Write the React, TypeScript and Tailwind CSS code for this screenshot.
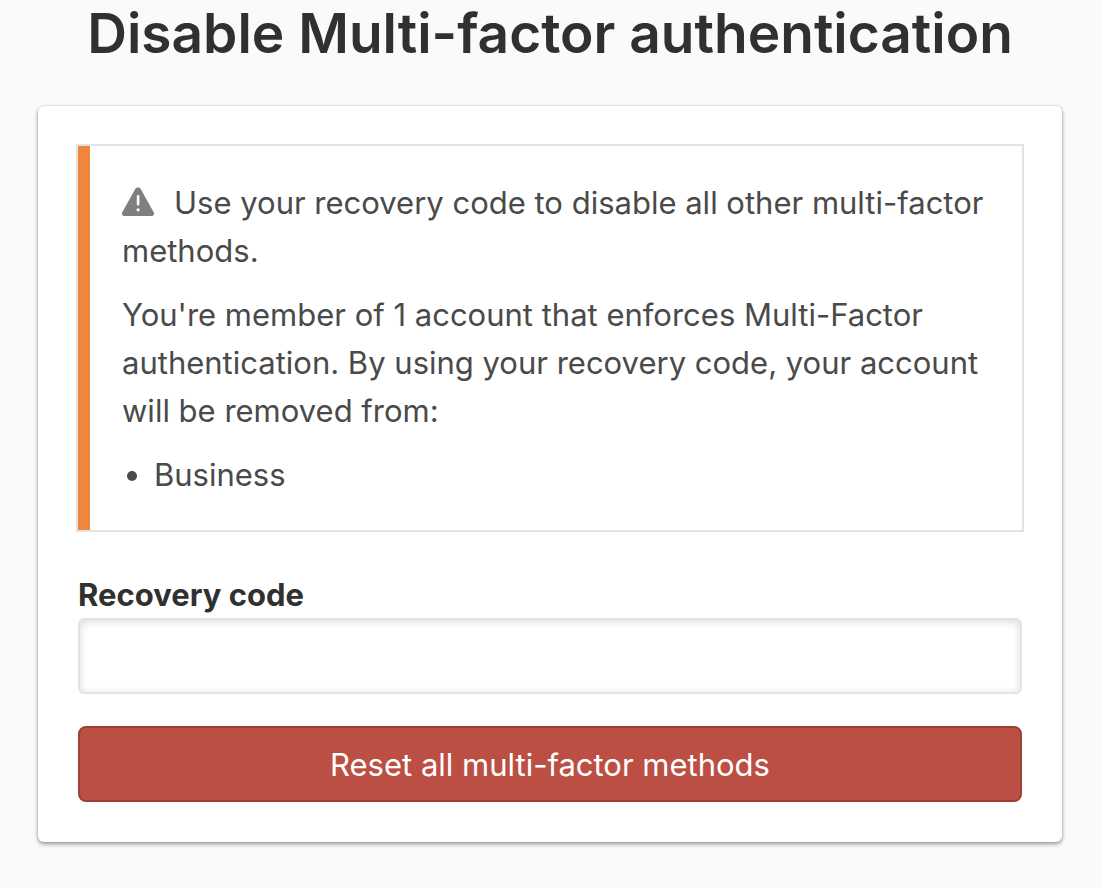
export default function App() {
  return (
    <main className="min-h-screen bg-[#fafafa] pr-10 pl-[38px] pb-11 font-[Inter,sans-serif] text-[#4a4a4a]">
      <h1 className="text-center text-[55px] leading-[66px] font-semibold text-[#303030]">Disable Multi-factor authentication</h1>
      <section className="mt-10 rounded-md bg-white px-[38px] pt-[38px] pb-10 shadow-[0_2px_4px_rgba(0,0,0,0.4),0_0_2px_rgba(0,0,0,0.15)]">
        <div className="flex border-2 border-[#e3e3e3]">
          <div className="w-3 shrink-0 bg-[#f0853f]" />
          <div className="flex flex-col gap-4 pt-[33px] pr-6 pb-[31px] pl-8 text-[31px] leading-[48px]">
            <p>
              <svg viewBox="0 0 32 29" className="mr-5 inline-block h-[29px] w-8 align-[-2px]" aria-hidden="true">
                <path d="M13.4 1.8C14.5 0 17.5 0 18.6 1.8L31.7 25.2C32.6 27 31.6 29 29.6 29H2.4C.4 29-.6 27 .3 25.2Z" fill="#7f7f7f" />
                <rect x="14.8" y="8" width="2.6" height="10.5" rx="1" fill="#fff" />
                <circle cx="16.1" cy="22.8" r="1.6" fill="#fff" />
              </svg>
              Use your recovery code to disable all other multi-factor methods.
            </p>
            <p>You're member of 1 account that enforces Multi-Factor authentication. By using your recovery code, your account will be removed from:</p>
            <ul className="list-disc pl-8">
              <li>Business</li>
            </ul>
          </div>
        </div>
        <form className="mt-10 px-0.5" onSubmit={(e) => e.preventDefault()}>
          <label htmlFor="code" className="block text-[31px] leading-[46px] font-bold text-[#303030]">Recovery code</label>
          <input id="code" type="text" className="block h-[76px] w-full rounded-md border-2 border-[#e3e3e3] bg-white px-4 text-[31px] shadow-[inset_0_2px_8px_rgba(0,0,0,0.14)]" />
          <button type="submit" className="mt-8 block h-[76px] w-full rounded-lg border-2 border-[#9f3f35] bg-[#bb4f43] pt-0.5 text-[31px] text-white">Reset all multi-factor methods</button>
        </form>
      </section>
    </main>
  );
}
